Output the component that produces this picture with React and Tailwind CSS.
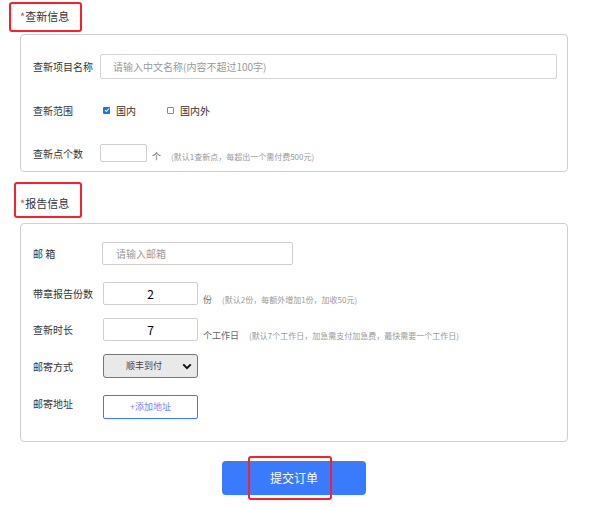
import React from "react";

const font = { fontFamily: '"Noto Sans CJK SC", "Noto Sans", sans-serif' };

const Label = ({ children, className = "" }) => (
  <div className={`w-[67px] shrink-0 text-[10px] text-[#333] ${className}`}>{children}</div>
);

const Note = ({ unit, children }) => (
  <div className="ml-[5px] flex items-end self-end pb-[1px] leading-none">
    <span className="text-[9px] text-[#666]">{unit}</span>
    <span className="ml-[10px] text-[8px] text-[#999]">{children}</span>
  </div>
);

const Check = ({ checked }) =>
  checked ? (
    <span className="flex h-[7px] w-[7px] items-center justify-center rounded-[1px] bg-[#1a73e8]">
      <svg viewBox="0 0 8 8" className="h-[6px] w-[6px]">
        <path d="M1.3 4.2 L3.2 6 L6.7 2" fill="none" stroke="#fff" strokeWidth="1.4" />
      </svg>
    </span>
  ) : (
    <span className="h-[7px] w-[7px] rounded-[1px] border border-[#888] bg-white" />
  );

const SectionTitle = ({ text, box }) => (
  <div className="relative">
    <div className={`pointer-events-none absolute rounded-[3px] border-2 border-[#f5222d] ${box}`} />
    <span className="text-[11px] text-[#333]">
      <span className="text-[#e64545]">*</span>
      {text}
    </span>
  </div>
);

export default function App() {
  return (
    <div className="min-h-[507px] w-[601px] bg-white" style={font}>
      {/* 查新信息 */}
      <div className="flex h-[34px] items-start pl-[20px] pt-[2px]">
        <SectionTitle text="查新信息" box="left-[-11px] top-[0px] h-[30px] w-[73px]" />
      </div>
      <div className="ml-[20px] w-[548px] rounded-[4px] border border-[#cfcfcf] pb-[9px] pl-[12px] pr-[10px] pt-[19px]">
        <div className="flex h-[25px] items-center">
          <Label>查新项目名称</Label>
          <div className="flex h-[25px] flex-1 items-center rounded-[2px] border border-[#d4d4d4] pl-[12px] text-[10px] text-[#999]">
            请输入中文名称(内容不超过100字)
          </div>
        </div>
        <div className="mt-[21px] flex h-[20px] items-center">
          <Label>查新范围</Label>
          <div className="flex items-center pl-[3px]">
            <Check checked />
            <span className="ml-[6px] text-[10px] text-[#333]">国内</span>
          </div>
          <div className="ml-[31px] flex items-center">
            <Check />
            <span className="ml-[6px] text-[10px] text-[#333]">国内外</span>
          </div>
        </div>
        <div className="mt-[24px] flex h-[18px] items-center">
          <Label>查新点个数</Label>
          <div className="h-[18px] w-[47px] rounded-[2px] border border-[#cfcfcf]" />
          <Note unit="个">(默认1查新点，每超出一个需付费500元)</Note>
        </div>
      </div>

      {/* 报告信息 */}
      <div className="flex h-[51px] items-start pl-[20px] pt-[17px]">
        <SectionTitle text="报告信息" box="left-[-6px] top-[-7px] h-[36px] w-[68px]" />
      </div>
      <div className="ml-[20px] w-[548px] rounded-[4px] border border-[#cfcfcf] pb-[22px] pl-[12px] pt-[18px]">
        <div className="flex h-[23px] items-center">
          <Label>邮 箱</Label>
          <div className="ml-[2px] flex h-[23px] w-[191px] items-center rounded-[2px] border border-[#cfcfcf] pl-[13px] text-[10px] text-[#999]">
            请输入邮箱
          </div>
        </div>
        <div className="mt-[17px] flex h-[23px] items-center">
          <Label>带章报告份数</Label>
          <div className="ml-[3px] flex h-[23px] w-[95px] items-center justify-center rounded-[2px] border border-[#cfcfcf] text-[12px] text-black">
            2
          </div>
          <Note unit="份">(默认2份，每额外增加1份，加收50元)</Note>
        </div>
        <div className="mt-[13px] flex h-[23px] items-center">
          <Label>查新时长</Label>
          <div className="ml-[3px] flex h-[23px] w-[95px] items-center justify-center rounded-[2px] border border-[#cfcfcf] text-[12px] text-black">
            7
          </div>
          <Note unit="个工作日">(默认7个工作日，加急需支付加急费，最快需要一个工作日)</Note>
        </div>
        <div className="mt-[13px] flex h-[24px] items-center">
          <Label>邮寄方式</Label>
          <div className="ml-[3px] flex h-[24px] w-[95px] items-center rounded-[3px] border border-[#767676] bg-[#e9e9e9] pl-[22px] pr-[5px]">
            <span className="flex-1 text-[9px] text-[#444]">顺丰到付</span>
            <svg viewBox="0 0 12 8" className="h-[7px] w-[10px]">
              <path d="M1.5 1.5 L6 6 L10.5 1.5" fill="none" stroke="#111" strokeWidth="2.4" />
            </svg>
          </div>
        </div>
        <div className="mt-[17px] flex h-[24px] items-start">
          <Label className="pt-[1px]">邮寄地址</Label>
          <div className="ml-[3px] flex h-[24px] w-[95px] items-center justify-center rounded-[2px] border border-[#3b7bf6] text-[9px] text-[#7d7fef]">
            +添加地址
          </div>
        </div>
      </div>

      {/* 提交 */}
      <div className="mt-[19px] flex pl-[222px]">
        <div className="relative flex h-[34px] w-[144px] items-center justify-center rounded-[4px] bg-[#3a7bfd] text-[12px] text-white">
          <div className="pointer-events-none absolute left-[26px] top-[-5px] h-[44px] w-[84px] rounded-[3px] border-2 border-[#f5222d]" />
          提交订单
        </div>
      </div>
    </div>
  );
}
